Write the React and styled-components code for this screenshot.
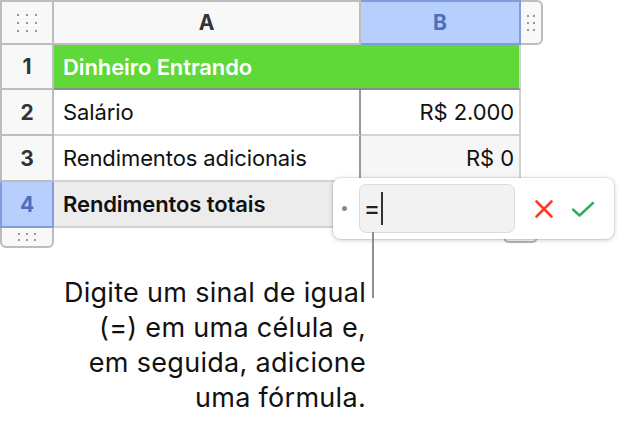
import React from "react";
import styled, { createGlobalStyle } from "styled-components";

const Global = createGlobalStyle`
  body {
    margin: 0;
    background: #fff;
    font-family: Inter, "Liberation Sans", Arial, sans-serif;
  }
`;

const Page = styled.div`
  position: relative;
  width: 630px;
  height: 428px;
  overflow: hidden;
`;

const Sheet = styled.div`
  display: grid;
  grid-template-columns: 54px 307px 160px 22px;
  grid-template-rows: 45px 45px repeat(3, 46px);
`;

const HeaderCell = styled.div`
  display: flex;
  align-items: center;
  justify-content: center;
  box-sizing: border-box;
  background: ${(p) => (p.$selected ? "#b6cffc" : "#f8f8f8")};
  border: 2px solid ${(p) => (p.$selected ? "#7d9ddc" : "#bdbdbd")};
  border-width: ${(p) => p.$borders || "2px 2px 2px 0"};
  color: ${(p) => (p.$selected ? "#4d70bd" : "#333")};
  font-weight: 700;
  font-size: 21px;
`;

const Corner = styled(HeaderCell)`
  border-width: 2px 2px 2px 2px;
`;

const Handle = styled.div`
  box-sizing: border-box;
  display: flex;
  align-items: center;
  justify-content: center;
  background: #f8f8f8;
  border: 2px solid #bdbdbd;
  border-left: none;
  border-radius: 0 6px 6px 0;
  height: 45px;
`;

const Dots = styled.div`
  display: grid;
  grid-template-columns: repeat(${(p) => p.$cols}, 2px);
  gap: ${(p) => p.$gap || "5px"};
  & > span {
    width: 2px;
    height: 2px;
    background: #777;
    border-radius: 1px;
  }
`;

const Cell = styled.div`
  box-sizing: border-box;
  display: flex;
  align-items: center;
  justify-content: ${(p) => (p.$right ? "flex-end" : "flex-start")};
  padding: ${(p) => (p.$right ? "0 5px 0 0" : "0 0 0 9px")};
  background: ${(p) => p.$bg || "#fff"};
  color: ${(p) => p.$color || "#111"};
  font-weight: ${(p) => (p.$bold ? 600 : 400)};
  font-size: 22px;
  letter-spacing: -0.1px;
  border-bottom: 2px solid ${(p) => p.$line || "#d2d2d2"};
  border-right: 2px solid ${(p) => p.$divider || "#d2d2d2"};
`;

const Banner = styled(Cell)`
  grid-column: 2 / span 2;
  background: #5fd93a;
  color: #fff;
  border-bottom: 2px solid #8c8c8c;
  border-right: 2px solid #d2d2d2;
  padding-left: 9px;
`;

const Empty = styled.div``;

const BottomHandle = styled.div`
  box-sizing: border-box;
  width: 54px;
  height: 20px;
  background: #f8f8f8;
  border: 2px solid #bdbdbd;
  border-top: none;
  border-radius: 0 0 6px 6px;
  display: flex;
  align-items: center;
  justify-content: center;
`;

const Callout = styled.p`
  margin: 27px 0 0 0;
  width: 366px;
  text-align: right;
  font-size: 27px;
  line-height: 35px;
  letter-spacing: 0.3px;
  color: #111;
`;

const Popup = styled.div`
  position: absolute;
  left: 333px;
  top: 178px;
  width: 281px;
  height: 61px;
  box-sizing: border-box;
  background: #fff;
  border-radius: 8px;
  box-shadow: 0 0 0 1px rgba(0, 0, 0, 0.06), 0 1px 5px rgba(0, 0, 0, 0.22);
  display: flex;
  align-items: center;
  padding: 0 0 0 9px;
`;

const Bullet = styled.span`
  width: 5px;
  height: 5px;
  border-radius: 50%;
  background: #8a8a8a;
  margin-right: 12px;
`;

const Field = styled.div`
  box-sizing: border-box;
  width: 156px;
  height: 49px;
  background: #f2f2f2;
  border: 1px solid #dcdcdc;
  border-radius: 7px;
  display: flex;
  align-items: center;
  padding-left: 4px;
  font-size: 24px;
  font-weight: 500;
  color: #222;
`;

const Caret = styled.span`
  display: inline-block;
  width: 2px;
  height: 33px;
  background: #333;
  margin-left: 1px;
`;

const IconButton = styled.span`
  display: flex;
  align-items: center;
  justify-content: center;
  margin-left: ${(p) => p.$gap};
`;

const Leader = styled.div`
  position: absolute;
  left: 372px;
  top: 232px;
  width: 2px;
  height: 66px;
  background: #8e8e8e;
`;

const Bump = styled.div`
  position: absolute;
  left: 503px;
  top: 226px;
  width: 35px;
  height: 17px;
  box-sizing: border-box;
  border: 2px solid #b5b5b5;
  border-top: none;
  border-radius: 0 0 6px 6px;
  background: #f8f8f8;
`;

const dots = (n) => Array.from({ length: n }, (_, i) => <span key={i} />);

export default function App() {
  return (
    <Page>
      <Global />
      <Sheet>
        <Corner>
          <Dots $cols={3} $gap="6px 7px">{dots(9)}</Dots>
        </Corner>
        <HeaderCell>A</HeaderCell>
        <HeaderCell $selected>B</HeaderCell>
        <Handle>
          <Dots $cols={2} $gap="5px 4px">{dots(6)}</Dots>
        </Handle>

        <HeaderCell $borders="0 2px 2px 2px">1</HeaderCell>
        <Banner $bold>Dinheiro Entrando</Banner>
        <Empty />

        <HeaderCell $borders="0 2px 2px 2px">2</HeaderCell>
        <Cell $divider="#9a9a9a">Salário</Cell>
        <Cell $right>R$ 2.000</Cell>
        <Empty />

        <HeaderCell $borders="0 2px 2px 2px">3</HeaderCell>
        <Cell $divider="#9a9a9a">Rendimentos adicionais</Cell>
        <Cell $right $bg="#f6f6f6">R$ 0</Cell>
        <Empty />

        <HeaderCell $selected $borders="0 2px 2px 2px">4</HeaderCell>
        <Cell $bold $bg="#ececec" $divider="#9a9a9a">Rendimentos totais</Cell>
        <Cell $bg="#ececec" />
        <Empty />
      </Sheet>
      <BottomHandle>
        <Dots $cols={3} $gap="4px 6px">{dots(6)}</Dots>
      </BottomHandle>

      <Callout>
        Digite um sinal de igual
        <br />
        (=) em uma célula e,
        <br />
        em seguida, adicione
        <br />
        uma fórmula.
      </Callout>

      <Bump />
      <Popup>
        <Bullet />
        <Field>
          =<Caret />
        </Field>
        <IconButton $gap="19px">
          <svg width="20" height="20" viewBox="0 0 20 20">
            <path d="M2.5 2.5 L17.5 17.5 M17.5 2.5 L2.5 17.5" stroke="#ff3b22" strokeWidth="2.6" strokeLinecap="round" />
          </svg>
        </IconButton>
        <IconButton $gap="17px">
          <svg width="24" height="20" viewBox="0 0 24 20">
            <path d="M2 10.5 L8.5 16.5 L22 4" stroke="#2cae5a" strokeWidth="2.4" fill="none" strokeLinecap="round" strokeLinejoin="round" />
          </svg>
        </IconButton>
      </Popup>
      <Leader />
    </Page>
  );
}
